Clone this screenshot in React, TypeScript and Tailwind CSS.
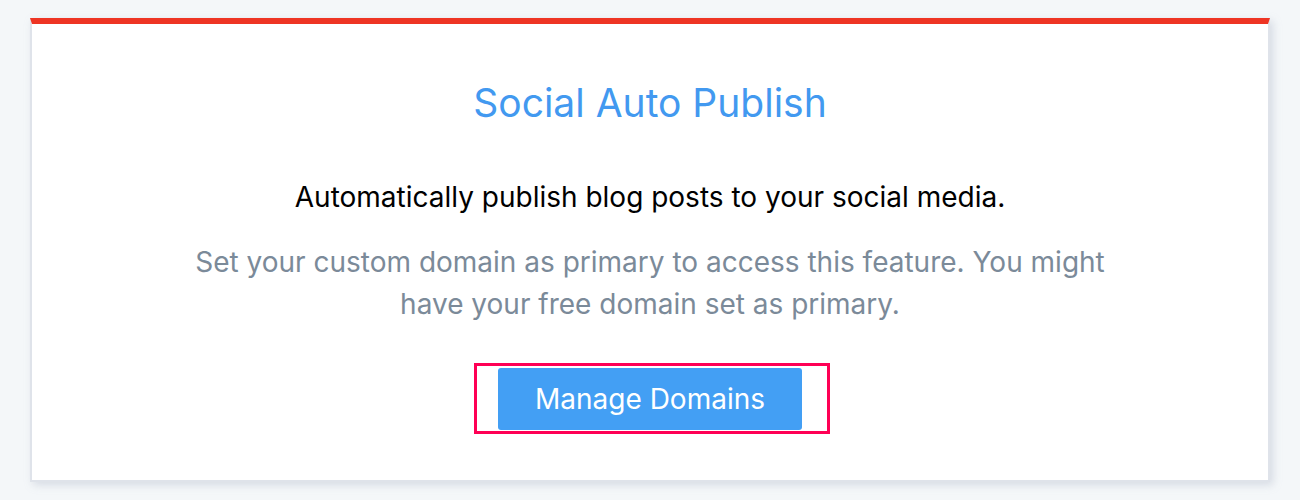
import React from "react";

export default function App() {
  return (
    <div
      className="w-[1300px] h-[500px] bg-[#f4f7f9] pt-[18px] pl-[30px] pr-[30px]"
      style={{ fontFamily: "Inter, 'Noto Sans', sans-serif" }}
    >
      <div className="w-[1240px] h-[464px] bg-white border-t-[6px] border-t-[#ee3524] border-x-2 border-b-2 border-x-[#dfe3ea] border-b-[#dfe3ea] shadow-[3px_3px_8px_rgba(160,170,190,0.35)] flex flex-col items-center">
        <h1 className="mt-[55px] text-[39px] leading-[48px] text-[#4299f0] font-normal">
          Social Auto Publish
        </h1>
        <p className="mt-[54px] text-[28px] leading-[32px] text-black">
          Automatically publish blog posts to your social media.
        </p>
        <p className="mt-[28px] w-[940px] text-center text-[28px] leading-[42px] text-[#7b8a99]">
          Set your custom domain as primary to access this feature. You might have your free domain set as primary.
        </p>
        <div className="mt-[38px] ml-[4px] border-[3px] border-[#ff0055] pl-[21px] pr-[25px] pt-[2px] pb-[1px]">
          <button className="block w-[304px] h-[62px] bg-[#439ff4] text-white text-[28px] rounded-[3px]">
            Manage Domains
          </button>
        </div>
      </div>
    </div>
  );
}
